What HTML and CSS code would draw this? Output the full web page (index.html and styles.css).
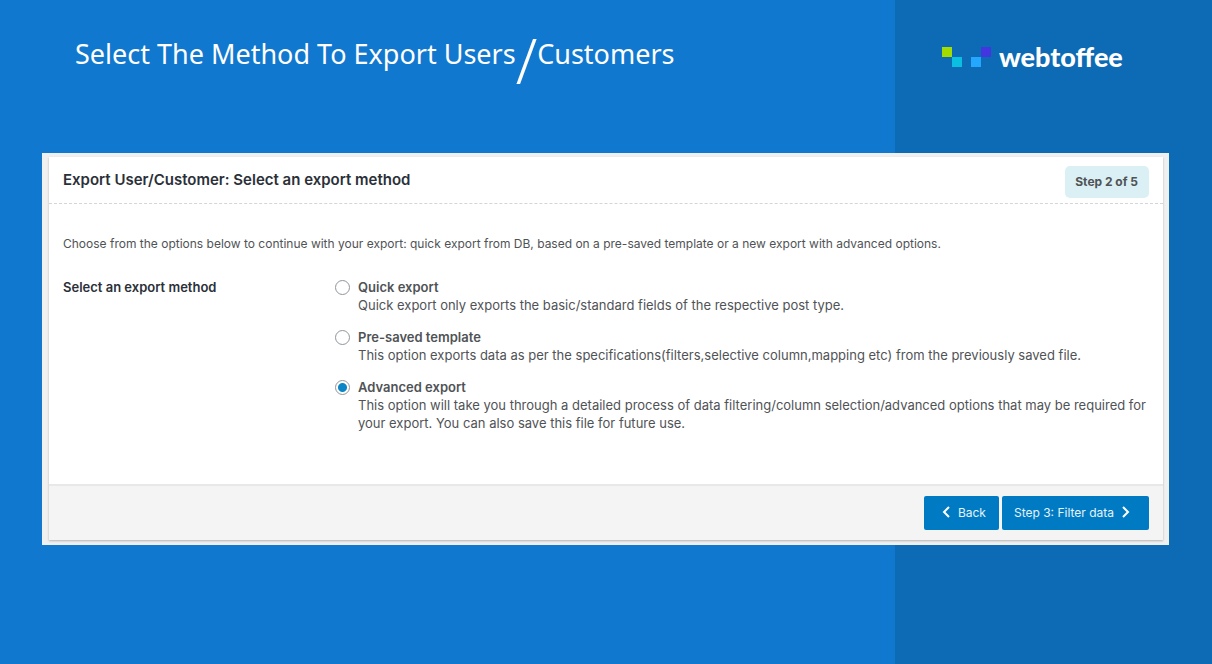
FILE: index.html
```html
<!DOCTYPE html>
<html lang="en">
<head>
<meta charset="utf-8">
<meta name="viewport" content="width=device-width, initial-scale=1">
<title>Select The Method To Export Users/Customers</title>
<link rel="stylesheet" href="styles.css">
</head>
<body>
<header class="banner">
  <h1 class="banner-title">Select The Method To Export Users<span class="slash">/</span>Customers</h1>
  <div class="logo">
    <svg class="logo-mark" width="50" height="20" viewBox="0 0 50 20" aria-hidden="true">
      <rect x="0" y="0" width="10" height="10" fill="#a4dc00"/>
      <rect x="10" y="10" width="10" height="10" fill="#0bbfe0"/>
      <rect x="29" y="10" width="10" height="10" fill="#24a8ff"/>
      <rect x="39" y="0" width="10" height="10" fill="#4335df"/>
    </svg>
    <span class="logo-name">webtoffee</span>
  </div>
</header>
<main class="frame">
  <form class="card">
    <div class="card-head">
      <h2 class="card-title">Export User/Customer: Select an export method</h2>
      <span class="step">Step 2 of 5</span>
    </div>
    <div class="card-body">
      <p class="intro">Choose from the options below to continue with your export: quick export from DB, based on a pre-saved template or a new export with advanced options.</p>
      <div class="field">
        <div class="field-label" id="method-label">Select an export method</div>
        <div class="options" role="radiogroup" aria-labelledby="method-label">
          <div class="option">
            <input class="radio" type="radio" name="method" id="quick">
            <div class="option-text">
              <label class="option-name" for="quick">Quick export</label>
              <p class="option-info">Quick export only exports the basic/standard fields of the respective post type.</p>
            </div>
          </div>
          <div class="option">
            <input class="radio" type="radio" name="method" id="template">
            <div class="option-text">
              <label class="option-name" for="template">Pre-saved template</label>
              <p class="option-info">This option exports data as per the specifications(filters,selective column,mapping etc) from the previously saved file.</p>
            </div>
          </div>
          <div class="option">
            <input class="radio" type="radio" name="method" id="advanced" checked>
            <div class="option-text">
              <label class="option-name" for="advanced">Advanced export</label>
              <p class="option-info">This option will take you through a detailed process of data filtering/column selection/advanced options that may be required for your export. You can also save this file for future use.</p>
            </div>
          </div>
        </div>
      </div>
    </div>
    <div class="card-foot">
      <button class="button" type="button">
        <svg class="chevron" width="8" height="14" viewBox="0 0 8 14" aria-hidden="true"><path d="M7 1 2 6l5 5" fill="none" stroke="currentColor" stroke-width="2"/></svg>
        Back
      </button>
      <button class="button button-next" type="button">
        Step 3: Filter data
        <svg class="chevron" width="8" height="14" viewBox="0 0 8 14" aria-hidden="true"><path d="m1 1 5 5-5 5" fill="none" stroke="currentColor" stroke-width="2"/></svg>
      </button>
    </div>
  </form>
</main>
</body>
</html>
```
FILE: styles.css
```css
* {
  box-sizing: border-box;
}

body {
  margin: 0;
  min-height: 100vh;
  background: linear-gradient(to right, #1178cf calc(100% - 317px), #0d6ab4 calc(100% - 317px));
  font-family: Inter, "Liberation Sans", sans-serif;
  color: #505356;
}

h1, h2, p {
  margin: 0;
}

.banner {
  display: grid;
  grid-template-columns: 1fr 270px;
  align-items: start;
  padding: 32px 0 0 75px;
  height: 153px;
}

.banner-title {
  font-family: "Noto Sans", sans-serif;
  font-size: 27px;
  font-weight: 400;
  line-height: 44px;
  color: #fff;
}

.slash {
  font-size: 62px;
  font-weight: 300;
  line-height: 0;
  vertical-align: -20px;
}

.logo {
  display: flex;
  align-items: center;
  gap: 7px;
  padding-top: 10px;
}

.logo-name {
  font-family: Lato, sans-serif;
  font-size: 27px;
  font-weight: 900;
  line-height: 30px;
  color: #fff;
}

.frame {
  margin: 0 43px 0 42px;
  padding: 4px 6px 5px 7px;
  background: #f0f0f0;
}

.card {
  background: #fff;
  box-shadow: 0 1px 2px rgba(0, 0, 0, 0.25);
}

.card-head {
  display: flex;
  align-items: flex-start;
  justify-content: space-between;
  height: 47px;
  padding: 9px 14px 0;
  border-bottom: 1px dashed #d3d5d6;
}

.card-title {
  padding-top: 4px;
  font-size: 15px;
  font-weight: 600;
  line-height: 20px;
  color: #2b3038;
}

.step {
  padding: 6px 11px 6px 10px;
  border-radius: 5px;
  background: #daf0f4;
  font-size: 12px;
  font-weight: 700;
  line-height: 20px;
}

.card-body {
  padding: 31px 14px 52px;
}

.intro {
  font-size: 12px;
  line-height: 18px;
}

.field {
  display: grid;
  grid-template-columns: 272px 1fr;
  padding-top: 25px;
}

.field-label {
  font-size: 13px;
  font-weight: 600;
  line-height: 18px;
  color: #2b3038;
}

.options {
  display: grid;
  gap: 14px;
}

.option {
  display: grid;
  grid-template-columns: 15px 1fr;
  gap: 8px;
}

.radio {
  appearance: none;
  width: 15px;
  height: 15px;
  margin: 2px 0 0;
  border: 1px solid #8f969e;
  border-radius: 50%;
  background: #fff;
}

.radio:checked {
  background: radial-gradient(circle, #0a86c6 4px, #fff 5px);
}

.option-name {
  display: block;
  font-size: 13px;
  font-weight: 600;
  line-height: 18px;
}

.option-info {
  font-size: 13px;
  line-height: 18px;
}

.card-foot {
  display: flex;
  justify-content: flex-end;
  gap: 3px;
  padding: 10px 14px;
  border-top: 2px solid #e8e8e8;
  background: #f4f4f4;
}

.button {
  display: flex;
  align-items: center;
  gap: 8px;
  height: 34px;
  padding: 0 13px 0 18px;
  border: 0;
  border-radius: 2px;
  background: #007bc3;
  color: #e6f3fa;
  font-family: inherit;
  font-size: 12px;
  line-height: 18px;
}

.button-next {
  padding: 0 19px 0 12px;
}

.chevron {
  color: #fff;
}
```
